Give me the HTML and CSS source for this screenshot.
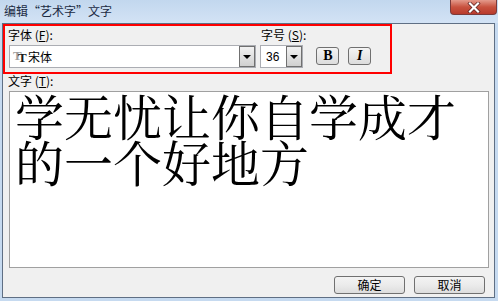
FILE: index.html
```html
<!DOCTYPE html>
<html>
<head>
  <meta charset="UTF-8">
  <title>编辑“艺术字”文字</title>
  <link rel="stylesheet" href="styles.css">
</head>
<body>
  <div class="window">
    <div class="titlebar">
      <div class="title">编辑“艺术字”文字</div>
      <div class="close">
        <svg width="16" height="11" viewBox="0 0 16 11">
          <path d="M4 1.5 L12 9.5 M12 1.5 L4 9.5" stroke="#5a2020" stroke-width="3.6" stroke-linecap="square"/>
          <path d="M4 1.5 L12 9.5 M12 1.5 L4 9.5" stroke="#fff" stroke-width="2.2" stroke-linecap="square"/>
        </svg>
      </div>
    </div>
    <div class="client">
      <div class="mark"></div>
      <div class="font-row">
        <div class="field">
          <div class="label">字体 (<u>F</u>):</div>
          <div class="combo font-combo">
            <span class="tt"><span class="tt-back">T</span><span class="tt-front">T</span></span>
            <span class="combo-text">宋体</span>
            <span class="arrow"></span>
          </div>
        </div>
        <div class="field">
          <div class="label">字号 (<u>S</u>):</div>
          <div class="combo size-combo">
            <span class="combo-text">36</span>
            <span class="arrow"></span>
          </div>
        </div>
        <div class="style-btn bold">B</div>
        <div class="style-btn italic">I</div>
      </div>
      <div class="label text-label">文字 (<u>T</u>):</div>
      <div class="textbox">学无忧让你自学成才<br>的一个好地方</div>
      <div class="actions">
        <button class="btn">确定</button>
        <button class="btn">取消</button>
      </div>
    </div>
  </div>
</body>
</html>
```

FILE: styles.css
```css
body {
  margin: 0;
  font-family: "Noto Sans CJK SC", sans-serif;
  font-size: 12px;
  color: #000;
}
.window {
  width: 498px;
  height: 301px;
  background: #c6daf0;
  display: flex;
  flex-direction: column;
  padding: 0 3px 3px 2px;
  box-sizing: border-box;
}
.titlebar {
  height: 23px;
  display: flex;
  justify-content: space-between;
  align-items: flex-start;
  margin: 0 -3px 0 -2px;
  background: linear-gradient(#c2d7ee, #d3e3f5);
}
.title {
  padding: 3px 0 0 4px;
  line-height: 15px;
  color: #1b2b44;
}
.close {
  width: 47px;
  height: 15px;
  margin-right: 1px;
  box-sizing: border-box;
  border: 1px solid #7a3a3a;
  border-top: none;
  border-radius: 0 0 4px 4px;
  background: linear-gradient(#e49a8c, #c8523f 50%, #b83a2c);
  display: flex;
  align-items: center;
  justify-content: center;
}
.client {
  flex: 1;
  position: relative;
  background: #f0f0f0;
  border: 1px solid #5f6f84;
  padding: 3px 0 0 5px;
}
.mark {
  position: absolute;
  left: 0;
  top: 0;
  width: 389px;
  height: 50px;
  border: 2px solid #ff0000;
  box-sizing: border-box;
}
.font-row {
  display: flex;
  align-items: flex-end;
}
.field {
  display: flex;
  flex-direction: column;
}
.label {
  line-height: 15px;
  height: 15px;
}
.label u {
  text-decoration-thickness: 1px;
}
.combo {
  margin-top: 3px;
  height: 23px;
  box-sizing: border-box;
  border: 1px solid #abadb3;
  background: #fff;
  display: flex;
  align-items: center;
  position: relative;
}
.font-combo {
  width: 247px;
  margin-left: 1px;
}
.size-combo {
  width: 43px;
  margin-left: 4px;
}
.field + .field .label {
  margin-left: 5px;
}
.tt {
  position: relative;
  width: 14px;
  height: 15px;
  margin-left: 3px;
  font-family: "Liberation Serif", serif;
  font-weight: bold;
  line-height: 1;
}
.tt-back {
  position: absolute;
  left: 0;
  top: 0;
  font-size: 13px;
  color: #9c9c9c;
}
.tt-front {
  position: absolute;
  left: 5px;
  top: 2px;
  font-size: 13px;
  color: #1a1a1a;
}
.combo-text {
  flex: 1;
  padding-left: 1px;
}
.size-combo .combo-text {
  padding-left: 5px;
  font-family: "Liberation Sans", sans-serif;
}
.arrow {
  width: 16px;
  height: 21px;
  box-sizing: border-box;
  border: 1px solid #707070;
  background: linear-gradient(#f2f2f2, #d0d0d0);
  display: flex;
  align-items: center;
  justify-content: center;
}
.arrow::after {
  content: "";
  border-left: 4px solid transparent;
  border-right: 4px solid transparent;
  border-top: 4px solid #000;
}
.style-btn {
  width: 23px;
  height: 18px;
  box-sizing: border-box;
  border: 1px solid #707070;
  border-radius: 3px;
  background: linear-gradient(#f4f4f4, #dcdcdc);
  margin-bottom: 3px;
  display: flex;
  align-items: center;
  justify-content: center;
  font-family: "Liberation Serif", serif;
  font-size: 14px;
  font-weight: bold;
}
.bold {
  margin-left: 10px;
}
.italic {
  margin-left: 9px;
  font-style: italic;
}
.text-label {
  margin-top: 5px;
}
.textbox {
  margin: 3px 0 0 1px;
  width: 480px;
  height: 177px;
  box-sizing: border-box;
  border: 1px solid #a0a0a0;
  background: #fff;
  padding: 0 0 0 5px;
  font-family: "Noto Serif CJK SC", "Noto Sans CJK SC", serif;
  font-size: 49px;
  line-height: 46px;
}
.actions {
  display: flex;
  justify-content: flex-end;
  gap: 9px;
  width: 477px;
  margin-top: 8px;
}
.btn {
  width: 71px;
  height: 18px;
  padding: 0;
  box-sizing: border-box;
  border: 1px solid #707070;
  border-radius: 3px;
  background: linear-gradient(#f3f3f3, #ebebeb 50%, #dddddd);
  font-family: "Noto Sans CJK SC", sans-serif;
  font-size: 12px;
  line-height: 16px;
}
```
